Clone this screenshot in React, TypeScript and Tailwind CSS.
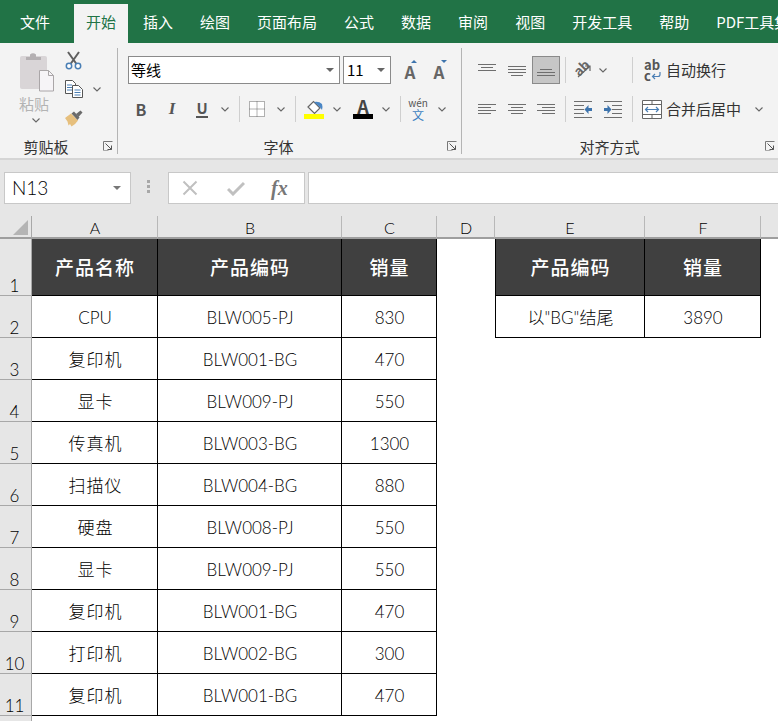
import type { ReactNode } from 'react'

const tabs = ['插入', '绘图', '页面布局', '公式', '数据', '审阅', '视图', '开发工具', '帮助', 'PDF工具集']

const rows = [
  ['CPU', 'BLW005-PJ', '830'],
  ['复印机', 'BLW001-BG', '470'],
  ['显卡', 'BLW009-PJ', '550'],
  ['传真机', 'BLW003-BG', '1300'],
  ['扫描仪', 'BLW004-BG', '880'],
  ['硬盘', 'BLW008-PJ', '550'],
  ['显卡', 'BLW009-PJ', '550'],
  ['复印机', 'BLW001-BG', '470'],
  ['打印机', 'BLW002-BG', '300'],
  ['复印机', 'BLW001-BG', '470'],
]

function Chevron({ className = '' }: { className?: string }) {
  return (
    <svg width="8" height="5" viewBox="0 0 8 5" className={className}>
      <path d="M0.5 0.5 4 4l3.5-3.5" fill="none" stroke="#666" strokeWidth="1.1" />
    </svg>
  )
}

function Slot({ w, children }: { w: string; children?: ReactNode }) {
  return <div className={`flex h-full shrink-0 items-center justify-center ${w}`}>{children}</div>
}

function Sep({ className = '' }: { className?: string }) {
  return <div className={`h-[26px] w-px shrink-0 bg-[#cfcfcf] ${className}`} />
}

function Launcher() {
  return (
    <svg width="10" height="10" viewBox="0 0 10 10">
      <path d="M.5 9.5v-9h9" fill="none" stroke="#777" />
      <path d="M2.5 2.5 8.5 8.5M8.5 4.5v4h-4" fill="none" stroke="#555" />
      <path d="M.5 9.5h5" stroke="#aaa" />
    </svg>
  )
}

function GroupLabel({ text, pad, launcher }: { text: string; pad: string; launcher: string }) {
  return (
    <div className="mt-auto flex h-[24px] items-center">
      <span className={`flex-1 pt-[1px] text-center text-[15px] leading-none text-[#333] ${pad}`}>{text}</span>
      <span className={`flex shrink-0 ${launcher}`}>
        <Launcher />
      </span>
    </div>
  )
}

function Lines({ ys, xs }: { ys: number[]; xs: [number, number][] }) {
  return (
    <svg width="18" height="18" viewBox="0 0 18 18">
      {ys.map((y, i) => (
        <path key={y} d={`M${xs[i][0]} ${y + 0.5}H${xs[i][1]}`} stroke="#6e6e6e" />
      ))}
    </svg>
  )
}

function PasteIcon() {
  return (
    <svg width="36" height="40" viewBox="0 0 36 40">
      <rect x="1" y="4" width="27" height="33" rx="2" fill="#d9d5d7" />
      <path d="M7 8V5h4V2.500Q14 0 17 2.500V5h5v3z" fill="#b4b0b2" />
      <path d="M20.500 18.500h9l5 5v15.500h-14z" fill="#f6f4f7" stroke="#aaa6a8" />
      <path d="M29.500 18.500v5h5" fill="none" stroke="#aaa6a8" />
    </svg>
  )
}

function ScissorsIcon() {
  return (
    <svg width="17" height="19" viewBox="0 0 17 19">
      <path d="M3 1 11.500 13M14 1 5.500 13" stroke="#5f5f5f" strokeWidth="2" fill="none" />
      <circle cx="4" cy="15" r="2.700" fill="#fff" stroke="#4a7fb5" strokeWidth="1.500" />
      <circle cx="13" cy="15" r="2.700" fill="#fff" stroke="#4a7fb5" strokeWidth="1.500" />
    </svg>
  )
}

function CopyIcon() {
  return (
    <svg width="18" height="18" viewBox="0 0 18 18">
      <path d="M.5.5h7l3 3v10h-10z" fill="#fff" stroke="#555" />
      <path d="M2 5h5M2 7.500h6M2 10h6" stroke="#4a7fb5" />
      <path d="M7.500 5.500h6l4 4v8h-10z" fill="#fff" stroke="#555" />
      <path d="M9.500 10h6M9.500 12.500h6M9.500 15h6" stroke="#4a7fb5" />
    </svg>
  )
}

function BrushIcon() {
  return (
    <svg width="19" height="17" viewBox="0 0 19 17">
      <path d="M0 8 6 3.500 13 10.500Q10 15 6.500 16.500L5 14 3.500 15.500 2.500 11.500z" fill="#e6bf7d" />
      <path d="M6.500 3.500 9 1.500 14.500 7.500 12.500 10z" fill="#6a6a6a" />
      <path d="M11 4 15.500.5 17.500 2.500 13.500 7z" fill="#6a6a6a" />
    </svg>
  )
}

function BordersIcon() {
  return (
    <svg width="16" height="16" viewBox="0 0 16 16">
      <path d="M.5.5h15v15H.5zM8 .5v15M.5 8h15" fill="#fff" stroke="#666" strokeDasharray="1 1" />
    </svg>
  )
}

function FillIcon() {
  return (
    <svg width="20" height="19" viewBox="0 0 20 19">
      <path d="M4 7 9.500 1.500 16 8l-5.500 5.500z" fill="#fff" stroke="#666" strokeWidth="1.200" />
      <path d="M10 2q5-1 8 2 1 3 0 6-1.500-2.500-4-4.500z" fill="#4a86c5" />
      <rect x="0" y="14" width="20" height="5" fill="#ffff00" />
    </svg>
  )
}

function WrapArrow() {
  return (
    <svg width="10" height="8" viewBox="0 0 10 8" className="shrink-0">
      <path d="M9 0v2.500Q9 4.500 7 4.500H1.500M4 2 1.500 4.500 4 7" fill="none" stroke="#4a7fb5" strokeWidth="1.200" />
    </svg>
  )
}

function MergeIcon() {
  return (
    <svg width="20" height="19" viewBox="0 0 20 19">
      <path d="M.5.5h19v18H.5z" fill="#fff" stroke="#666" />
      <path d="M.5 4.500h19M.5 14.500h19M10 .5v4M10 14.500v4" stroke="#666" />
      <path d="M3.500 9.500h13M6 7 3.500 9.500 6 12M14 7l2.500 2.500L14 12" fill="none" stroke="#4a7fb5" strokeWidth="1.200" />
    </svg>
  )
}

function IndentIcon({ flip }: { flip?: boolean }) {
  return (
    <svg width="18" height="17" viewBox="0 0 18 17" className={flip ? '-scale-x-100' : ''}>
      <path d="M0 .5h18M8 4.500h10M8 8.500h10M8 12.500h10M0 16.500h18" stroke="#6e6e6e" />
      <path d="M0 7h3.500V4L7.500 8.500 3.500 13v-3H0z" fill="#3d74ad" />
    </svg>
  )
}

function Ribbon() {
  return (
    <div className="flex h-[117px] border-b-2 border-[#d5d5d5] bg-[#f3f3f3] text-[15px] text-[#333]">
      {/* 剪贴板 */}
      <div className="flex w-[117px] shrink-0 flex-col">
        <div className="flex">
          <div className="ml-[19px] flex w-[36px] flex-col items-center pt-[9px]">
            <PasteIcon />
            <span className="mt-[2px] mr-[6px] text-[15px] leading-[20px] text-[#b3b3b3]">粘贴</span>
            <Chevron className="mt-[4px] mr-[2px]" />
          </div>
          <div className="ml-[10px] flex flex-col pt-[8px]">
            <ScissorsIcon />
            <div className="mt-[10px] flex items-center">
              <CopyIcon />
              <Chevron className="ml-[10px]" />
            </div>
            <div className="mt-[12px]">
              <BrushIcon />
            </div>
          </div>
        </div>
        <GroupLabel text="剪贴板" pad="pr-[11px]" launcher="mr-[4px]" />
      </div>
      <div className="mt-[5px] h-[106px] w-px shrink-0 bg-[#b4b4b4]" />

      {/* 字体 */}
      <div className="flex w-[343px] shrink-0 flex-col pl-[10px]">
        <div className="mt-[13px] flex h-[28px] items-center">
          <div className="flex h-full w-[212px] items-center justify-between border border-[#8a8a8a] bg-white pr-[5px] pl-[2px] text-black">
            <span>等线</span>
            <svg width="8" height="4" viewBox="0 0 8 4"><path d="M0 0h8L4 4z" fill="#666" /></svg>
          </div>
          <div className="ml-[3px] flex h-full w-[48px] items-center justify-between border border-[#8a8a8a] bg-white pr-[5px] pl-[3px] text-black">
            <span>11</span>
            <svg width="8" height="4" viewBox="0 0 8 4"><path d="M0 0h8L4 4z" fill="#666" /></svg>
          </div>
          <div className="relative mt-[3px] ml-[12px] flex w-[14px] justify-center text-[17px] leading-none font-bold text-[#666]">
            A
            <svg width="6" height="3" viewBox="0 0 6 3" className="absolute -top-[3px] left-[8px]"><path d="M0 3h6L3 0z" fill="#3d74ad" /></svg>
          </div>
          <div className="relative mt-[3px] ml-[15px] flex w-[14px] justify-center text-[17px] leading-none font-bold text-[#666]">
            A
            <svg width="6" height="3" viewBox="0 0 6 3" className="absolute -top-[3px] left-[9px]"><path d="M0 0h6L3 3z" fill="#3d74ad" /></svg>
          </div>
        </div>
        <div className="mt-[12px] flex h-[26px] items-center text-[#555]">
          <Slot w="w-[26px]"><span className="text-[16px] font-bold">B</span></Slot>
          <Slot w="w-[36px]"><span className="[font-family:'Liberation_Serif',serif] text-[17px] font-bold italic">I</span></Slot>
          <Slot w="w-[24px]"><span className="border-b-2 border-[#555] text-[15px] leading-[16px] font-bold">U</span></Slot>
          <Slot w="w-[22px]"><Chevron /></Slot>
          <Sep className="ml-[3px] mr-[2px]" />
          <Slot w="w-[30px]"><BordersIcon /></Slot>
          <Slot w="w-[18px]"><Chevron /></Slot>
          <Sep className="ml-[5px] mr-[4px]" />
          <Slot w="w-[28px]"><FillIcon /></Slot>
          <Slot w="w-[18px]"><Chevron /></Slot>
          <Slot w="w-[34px]">
            <div className="flex w-[20px] flex-col items-center">
              <span className="text-[18px] leading-[15px] font-bold text-[#444]">A</span>
              <div className="h-[5px] w-[20px] bg-black" />
            </div>
          </Slot>
          <Slot w="w-[12px]"><Chevron /></Slot>
          <Sep className="ml-[8px] mr-[7px]" />
          <Slot w="w-[20px]">
            <div className="flex flex-col items-center">
              <span className="text-[10px] leading-[11px]">wén</span>
              <span className="text-[12px] leading-[13px] text-[#3d7fc1]">文</span>
            </div>
          </Slot>
          <Slot w="w-[28px]"><Chevron /></Slot>
        </div>
        <GroupLabel text="字体" pad="pr-[18px]" launcher="mr-[4px]" />
      </div>
      <div className="mt-[5px] h-[106px] w-px shrink-0 bg-[#b4b4b4]" />

      {/* 对齐方式 */}
      <div className="flex flex-1 flex-col pl-[10px]">
        <div className="mt-[13px] flex h-[28px] items-center">
          <Slot w="w-[29px]"><Lines ys={[3, 6, 9]} xs={[[0, 18], [3, 15], [0, 18]]} /></Slot>
          <Slot w="w-[31px]"><Lines ys={[5, 8, 11, 14]} xs={[[0, 18], [0, 18], [0, 18], [3, 15]]} /></Slot>
          <Slot w="w-[28px] border border-[#8a8a8a] bg-[#c6c6c6]"><Lines ys={[8, 11, 14]} xs={[[3, 15], [0, 18], [0, 18]]} /></Slot>
          <Sep className="ml-[5px]" />
          <Slot w="w-[26px] ml-[4px]">
            <div className="relative h-[20px] w-[20px]">
              <span className="absolute top-[1px] left-[0px] -rotate-45 text-[13px] leading-[13px] font-bold text-[#666]">ab</span>
              <svg width="20" height="20" viewBox="0 0 20 20" className="absolute top-0 left-0">
                <path d="M5 17 17 6M12 6h5v5" fill="none" stroke="#666" strokeWidth="1.200" />
              </svg>
            </div>
          </Slot>
          <Slot w="w-[14px]"><Chevron /></Slot>
          <Sep className="ml-[22px]" />
          <div className="ml-[11px] flex w-[17px] shrink-0 flex-col text-[13px] leading-[11px] font-bold text-[#555]">
            <span>ab</span>
            <span className="flex items-center">c<WrapArrow /></span>
          </div>
          <span className="ml-[5px]">自动换行</span>
        </div>
        <div className="mt-[12px] flex h-[26px] items-center">
          <Slot w="w-[30px]"><Lines ys={[4, 7, 10, 13]} xs={[[0, 18], [0, 13], [0, 18], [0, 13]]} /></Slot>
          <Slot w="w-[29px]"><Lines ys={[4, 7, 10, 13]} xs={[[0, 18], [3, 15], [0, 18], [3, 15]]} /></Slot>
          <Slot w="w-[30px]"><Lines ys={[4, 7, 10, 13]} xs={[[0, 18], [5, 18], [0, 18], [5, 18]]} /></Slot>
          <Sep className="ml-[4px]" />
          <Slot w="w-[34px]"><IndentIcon flip /></Slot>
          <Slot w="w-[26px]"><IndentIcon /></Slot>
          <Sep className="ml-[6px]" />
          <div className="ml-[9px] flex shrink-0"><MergeIcon /></div>
          <span className="ml-[4px]">合并后居中</span>
          <Chevron className="ml-[14px]" />
        </div>
        <GroupLabel text="对齐方式" pad="pr-[18px]" launcher="mr-[3px]" />
      </div>
    </div>
  )
}

function FormulaBar() {
  return (
    <div className="flex h-[56px] items-start bg-[#e6e6e6] pt-[12px]">
      <div className="ml-[4px] flex h-[32px] w-[127px] items-center justify-between border border-[#c8c8c8] bg-white pr-[9px] pl-[7px] text-[19px] font-light text-black">
        <span>N13</span>
        <svg width="8" height="4" viewBox="0 0 8 4"><path d="M0 0h8L4 4z" fill="#777" /></svg>
      </div>
      <div className="mt-[8px] ml-[16px] flex w-[4px] flex-col gap-[2px]">
        <div className="h-[3px] w-[3px] bg-[#a8a8a8]" />
        <div className="h-[3px] w-[3px] bg-[#a8a8a8]" />
        <div className="h-[3px] w-[3px] bg-[#a8a8a8]" />
      </div>
      <div className="ml-[17px] flex h-[32px] w-[137px] items-center border border-[#c8c8c8] bg-white">
        <svg width="16" height="16" viewBox="0 0 16 16" className="ml-[13px]">
          <path d="M1.500 1.500 14.500 14.500M14.500 1.500 1.500 14.500" stroke="#c0c0c0" strokeWidth="2" />
        </svg>
        <svg width="18" height="15" viewBox="0 0 18 15" className="ml-[29px]">
          <path d="M1 8l5 5L17 2" fill="none" stroke="#c0c0c0" strokeWidth="3" />
        </svg>
        <span className="ml-[26px] [font-family:'Liberation_Serif',serif] text-[20px] leading-none font-bold text-[#777] italic">fx</span>
      </div>
      <div className="ml-[3px] h-[32px] flex-1 border border-r-0 border-[#c8c8c8] bg-white" />
    </div>
  )
}

function ColHead({ label, last }: { label?: string; last?: boolean }) {
  return (
    <div className={`flex items-end justify-center border-b-2 border-b-[#9e9e9e] bg-[#e6e6e6] pl-[1px] text-[16px] leading-[19px] font-light text-black ${last ? '' : 'border-r border-r-[#b8b8b8]'}`}>
      {label}
    </div>
  )
}

function RowHead({ n }: { n?: number }) {
  return (
    <div className="flex items-end justify-center border-r border-b border-[#a8a8a8] bg-[#e6e6e6] pr-[2px] text-[17px] leading-[18px] font-light text-black">
      {n}
    </div>
  )
}

function HeadCell({ text, left }: { text: string; left?: boolean }) {
  return (
    <div className={`flex items-center justify-center border-r border-b border-black bg-[#404040] pt-[3px] pl-[1px] text-[19px] font-medium tracking-[1px] text-white ${left ? 'border-l' : ''}`}>
      {text}
    </div>
  )
}

function Cell({ text, cjk, left }: { text: string; cjk?: boolean; left?: boolean }) {
  return (
    <div className={`flex items-center justify-center border-r border-b border-black bg-white pt-[2px] text-[17px] font-light text-black ${cjk ? 'pl-[2px] tracking-[1px]' : 'pl-[1px]'} ${left ? 'border-l' : ''}`}>
      {text}
    </div>
  )
}

function Sheet() {
  return (
    <div className="grid grid-cols-[32px_126px_184px_95px_58px_150px_116px_1fr] grid-rows-[23px_57px_repeat(11,42px)] bg-white">
      <div className="flex items-end justify-end border-r border-b-2 border-r-[#a8a8a8] border-b-[#9e9e9e] bg-[#e6e6e6] pr-[3px] pb-[2px]">
        <svg width="15" height="15" viewBox="0 0 15 15"><path d="M15 0v15H0z" fill="#b4b4b4" /></svg>
      </div>
      <ColHead label="A" />
      <ColHead label="B" />
      <ColHead label="C" />
      <ColHead label="D" />
      <ColHead label="E" />
      <ColHead label="F" />
      <ColHead last />

      <RowHead n={1} />
      <HeadCell text="产品名称" />
      <HeadCell text="产品编码" />
      <HeadCell text="销量" />
      <div />
      <HeadCell text="产品编码" left />
      <HeadCell text="销量" />
      <div />

      {rows.map((r, i) => (
        <div key={i} className="contents">
          <RowHead n={i + 2} />
          <Cell text={r[0]} cjk={r[0] !== 'CPU'} />
          <Cell text={r[1]} />
          <Cell text={r[2]} />
          <div />
          {i === 0 ? <Cell text={'以"BG"结尾'} left /> : <div />}
          {i === 0 ? <Cell text="3890" /> : <div />}
          <div />
        </div>
      ))}
      <RowHead />
    </div>
  )
}

export default function App() {
  return (
    <div className="h-[721px] w-[778px] overflow-hidden bg-white [font-family:Lato,'Noto_Sans_CJK_SC',sans-serif]">
      <div className="[font-family:'Noto_Sans_CJK_SC',sans-serif]">
        <div className="flex h-[43px] items-end overflow-hidden bg-[#217346] text-[15px] text-white">
          <div className="ml-[8px] flex h-[39px] shrink-0 items-center px-[12px] pb-[2px]">文件</div>
          <div className="ml-[12px] flex h-[39px] shrink-0 items-center bg-[#f3f3f3] px-[12px] pb-[2px] text-[#217346]">开始</div>
          <div className="ml-[3px] flex shrink-0 gap-[3px]">
            {tabs.map(t => (
              <div key={t} className="flex h-[39px] shrink-0 items-center px-[12px] pb-[2px] whitespace-nowrap">{t}</div>
            ))}
          </div>
        </div>
        <Ribbon />
      </div>
      <FormulaBar />
      <Sheet />
    </div>
  )
}
